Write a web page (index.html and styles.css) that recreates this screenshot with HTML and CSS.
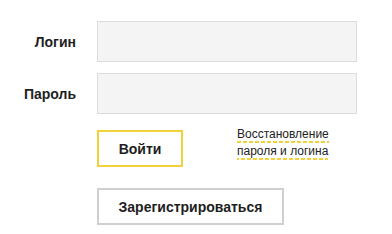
FILE: index.html
```html
<!DOCTYPE html>
<html lang="ru">
<head>
<meta charset="utf-8">
<link rel="stylesheet" href="styles.css">
</head>
<body>
<form class="auth">
  <label class="auth__label" for="login">Логин</label>
  <input class="auth__input" id="login" type="text">
  <label class="auth__label" for="pass">Пароль</label>
  <input class="auth__input" id="pass" type="password">
  <div class="auth__actions">
    <button class="btn btn--primary" type="button">Войти</button>
    <a class="auth__recover" href="#"><span class="auth__recover-text">Восстановление пароля и логина</span></a>
  </div>
  <div class="auth__register">
    <button class="btn btn--secondary" type="button">Зарегистрироваться</button>
  </div>
</form>
</body>
</html>
```
FILE: styles.css
```css
html, body {
  margin: 0;
  padding: 0;
  background: #fff;
}
body {
  font-family: "Liberation Sans", Arial, sans-serif;
  color: #222;
}
.auth {
  display: grid;
  grid-template-columns: 76px 260px;
  column-gap: 21px;
  row-gap: 11px;
  padding-top: 21px;
}
.auth__label {
  grid-column: 1;
  justify-self: end;
  align-self: center;
  font-size: 14px;
  font-weight: bold;
  color: #1e1e1e;
}
.auth__input {
  grid-column: 2;
  box-sizing: border-box;
  height: 41px;
  margin: 0;
  border: 1px solid #dcdcdc;
  background: #f4f4f4;
  outline: none;
}
.auth__actions {
  grid-column: 2;
  display: flex;
  align-items: flex-start;
  gap: 54px;
  margin-top: 5px;
}
.auth__register {
  grid-column: 2;
  margin-top: 10px;
}
.btn {
  box-sizing: border-box;
  height: 37px;
  margin: 0;
  padding: 0;
  background: #fff;
  font-family: "Liberation Sans", Arial, sans-serif;
  font-size: 14px;
  font-weight: bold;
  color: #1e1e1e;
  cursor: pointer;
}
.btn--primary {
  width: 86px;
  border: 2px solid #f2d23a;
}
.btn--secondary {
  width: 187px;
  border: 2px solid #cfcfcf;
}
.auth__recover {
  display: block;
  width: 100px;
  margin-top: -4px;
  font-size: 12px;
  line-height: 17px;
  color: #222;
  text-decoration: none;
}
.auth__recover-text {
  padding-bottom: 2px;
  background-image: linear-gradient(to right, #f2d23a 4px, transparent 4px);
  background-size: 6px 2px;
  background-repeat: repeat-x;
  background-position: 0 100%;
}
```
